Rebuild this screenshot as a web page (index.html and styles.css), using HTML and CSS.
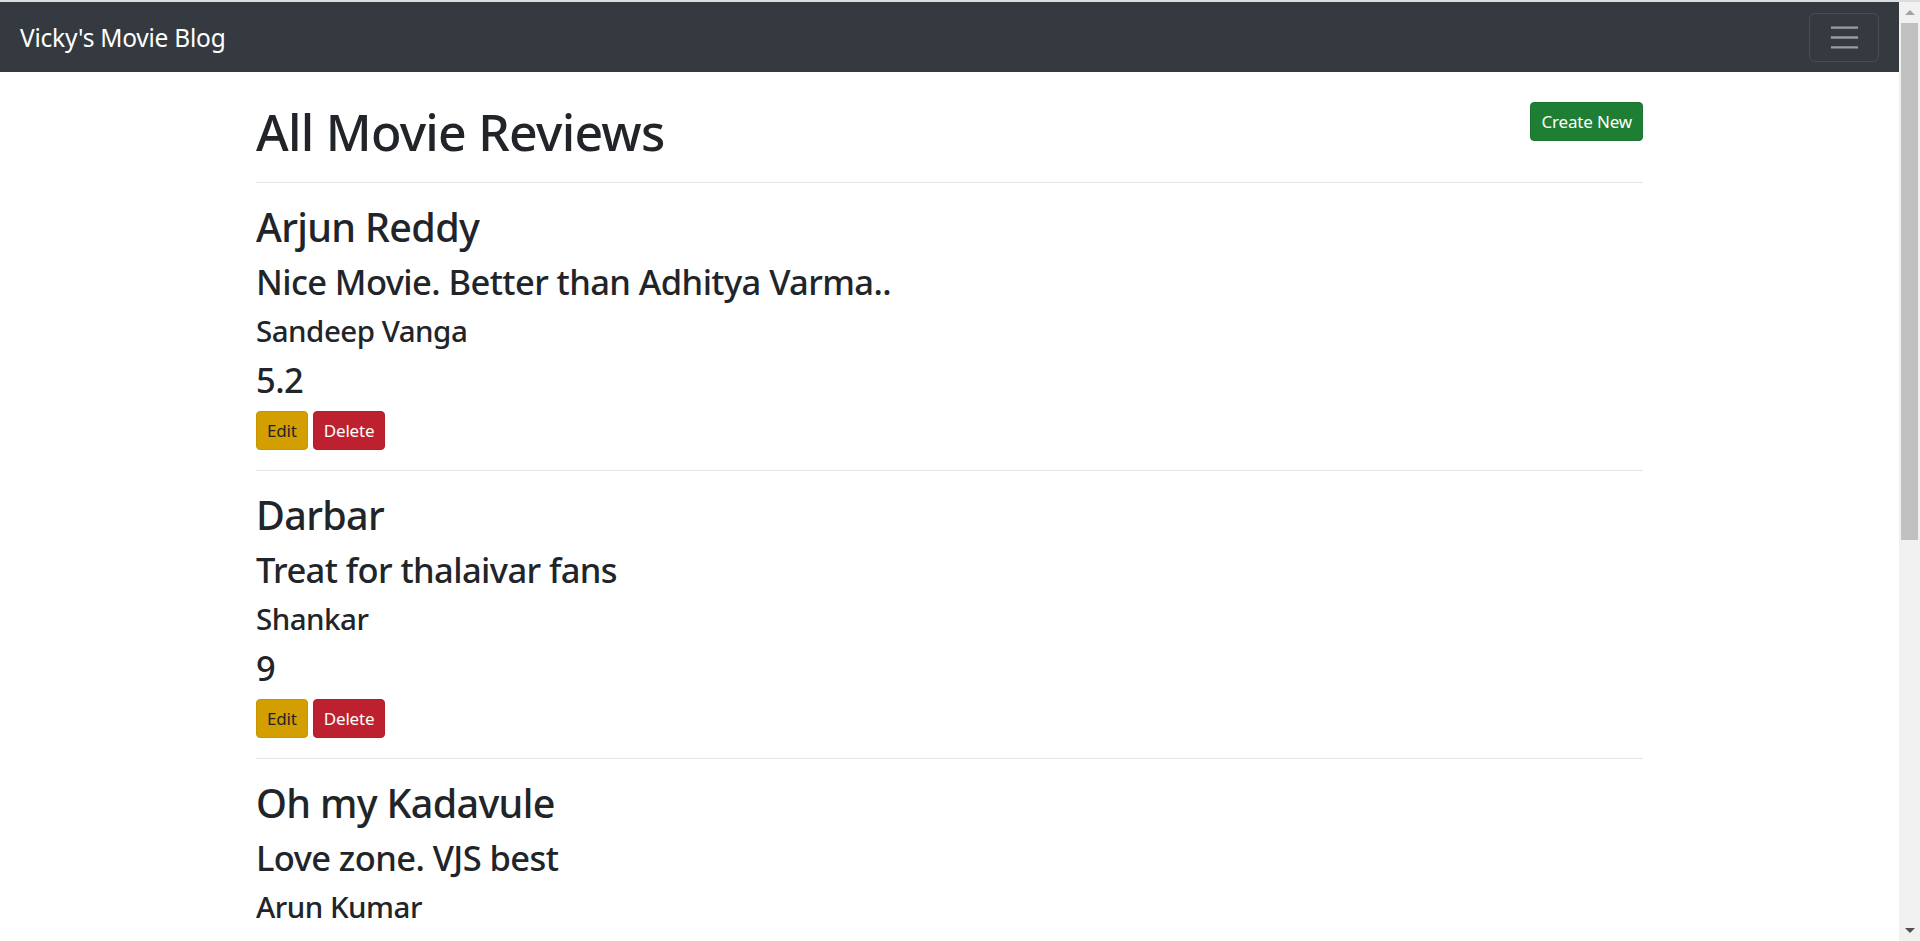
FILE: index.html
```html
<!DOCTYPE html>
<html lang="en">
<head>
<meta charset="utf-8">
<title>Vicky's Movie Blog</title>
<link rel="stylesheet" href="styles.css">
</head>
<body>
<div class="top-strip"></div>
<div class="window">
  <div class="main">
    <nav class="navbar">
      <a class="brand" href="#">Vicky's Movie Blog</a>
      <button class="toggler" type="button" aria-label="Toggle navigation">
        <svg class="toggler-icon" viewBox="0 0 30 30" width="30" height="30">
          <path d="M4 7h22M4 15h22M4 23h22" stroke="rgba(255,255,255,0.5)" stroke-width="2" stroke-linecap="butt" fill="none"/>
        </svg>
      </button>
    </nav>
    <div class="container">
      <div class="page-head">
        <h1 class="title">All Movie Reviews</h1>
        <a class="btn btn-success" href="#">Create New</a>
      </div>
      <hr class="divider">

      <div class="review">
        <h2 class="movie">Arjun Reddy</h2>
        <h3 class="comment">Nice Movie. Better than Adhitya Varma..</h3>
        <h4 class="director">Sandeep Vanga</h4>
        <h3 class="rating">5.2</h3>
        <div class="actions">
          <a class="btn btn-warning" href="#">Edit</a>
          <a class="btn btn-danger" href="#">Delete</a>
        </div>
      </div>
      <hr class="divider">

      <div class="review">
        <h2 class="movie">Darbar</h2>
        <h3 class="comment">Treat for thalaivar fans</h3>
        <h4 class="director">Shankar</h4>
        <h3 class="rating">9</h3>
        <div class="actions">
          <a class="btn btn-warning" href="#">Edit</a>
          <a class="btn btn-danger" href="#">Delete</a>
        </div>
      </div>
      <hr class="divider">

      <div class="review">
        <h2 class="movie">Oh my Kadavule</h2>
        <h3 class="comment">Love zone. VJS best</h3>
        <h4 class="director">Arun Kumar</h4>
      </div>
    </div>
  </div>
  <div class="scrollbar">
    <div class="sb-arrow sb-up"></div>
    <div class="sb-track">
      <div class="sb-thumb"></div>
    </div>
    <div class="sb-arrow sb-down"></div>
  </div>
</div>
</body>
</html>
```

FILE: styles.css
```css
* {
  box-sizing: border-box;
}

html, body {
  margin: 0;
  padding: 0;
  height: 941px;
  overflow: hidden;
  background: #ffffff;
}

body {
  font-family: "Noto Sans", "Open Sans", "DejaVu Sans", sans-serif;
  color: #212529;
  display: flex;
  flex-direction: column;
}

.top-strip {
  height: 2px;
  background: #dcdcdc;
  flex: none;
}

.window {
  flex: 1;
  display: flex;
  min-height: 0;
}

.main {
  flex: 1;
  min-width: 0;
  overflow: hidden;
}

/* Navbar */
.navbar {
  height: 70px;
  background: #343a40;
  display: flex;
  align-items: center;
  justify-content: space-between;
  padding: 0 20px;
}

.brand {
  color: #ffffff;
  text-decoration: none;
  font-size: 24.5px;
  line-height: 37.5px;
  font-weight: 400;
  letter-spacing: -0.01em;
  padding-top: 1px;
}

.toggler {
  width: 70px;
  height: 49px;
  margin-top: 1px;
  background: transparent;
  border: 1px solid rgba(255, 255, 255, 0.1);
  border-radius: 6px;
  display: flex;
  align-items: center;
  justify-content: center;
  padding: 0;
}

.toggler-icon {
  width: 37px;
  height: 37px;
  display: block;
}

/* Content */
.container {
  width: 1387px;
  margin: 0 auto;
  padding-top: 30px;
}

.page-head {
  display: flex;
  justify-content: space-between;
  align-items: flex-start;
}

.title {
  margin: 0;
  font-size: 50px;
  line-height: 60px;
  font-weight: 500;
  letter-spacing: -0.015em;
}

.divider {
  margin: 20px 0;
  border: 0;
  border-top: 1px solid rgba(0, 0, 0, 0.1);
  height: 0;
}

.review h2,
.review h3,
.review h4 {
  margin: 0 0 10px 0;
  font-weight: 500;
  letter-spacing: -0.017em;
}

.movie {
  font-size: 39.5px;
  line-height: 48px;
}

.comment,
.rating {
  font-size: 34.5px;
  line-height: 42px;
}

.director {
  font-size: 29.5px;
  line-height: 36px;
}

.actions {
  display: flex;
  gap: 5px;
}

/* Buttons */
.btn {
  display: inline-block;
  font-size: 17px;
  line-height: 27px;
  padding: 5px 10px;
  border: 1px solid transparent;
  border-radius: 4px;
  text-decoration: none;
  font-weight: 400;
  letter-spacing: -0.01em;
  white-space: nowrap;
}

.btn-success {
  background: #1e7e34;
  border-color: #1c7430;
  color: #ffffff;
}

.btn-warning {
  background: #d39e00;
  border-color: #c69500;
  color: #212529;
}

.btn-danger {
  background: #bd2130;
  border-color: #b21f2d;
  color: #ffffff;
}

/* Fake scrollbar */
.scrollbar {
  width: 21px;
  flex: none;
  background: #f1f1f1;
  display: flex;
  flex-direction: column;
}

.sb-arrow {
  height: 21px;
  flex: none;
  display: flex;
  align-items: center;
  justify-content: center;
}

.sb-up::before {
  content: "";
  border-left: 5px solid transparent;
  border-right: 5px solid transparent;
  border-bottom: 5px solid #a3a3a3;
}

.sb-down::before {
  content: "";
  border-left: 5px solid transparent;
  border-right: 5px solid transparent;
  border-top: 5px solid #505050;
}

.sb-track {
  flex: 1;
  padding: 0 2px;
}

.sb-thumb {
  height: 517px;
  background: #c1c1c1;
}
```
